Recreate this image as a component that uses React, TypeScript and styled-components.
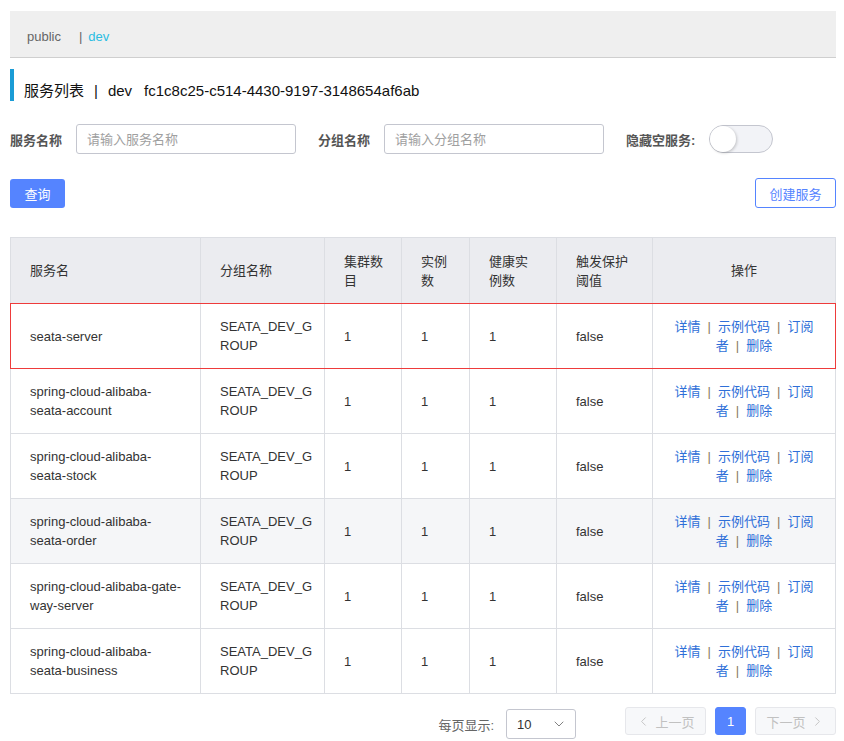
import React from 'react';
import styled, { createGlobalStyle } from 'styled-components';
import { ChevronLeft, ChevronRight, ChevronDown } from 'lucide-react';

const Global = createGlobalStyle`
  html, body { margin: 0; padding: 0; background: #fff; }
  body {
    font-family: "Liberation Sans", "Noto Sans CJK SC", sans-serif;
    font-size: 13px;
    color: #333;
  }
  * { box-sizing: border-box; }
`;

const Page = styled.div`
  padding: 11px 8px 0 10px;
`;

const NsBar = styled.div`
  height: 47px;
  background: #efefef;
  border-bottom: 1px solid #cfcfcf;
  display: flex;
  align-items: center;
  padding: 5px 0 0 17px;
  font-size: 13px;
`;

const NsItem = styled.span<{ $active?: boolean }>`
  color: ${(p) => (p.$active ? '#2bbde2' : '#666')};
`;

const NsSep = styled.span`
  color: #666;
  margin: 0 6px 0 18px;
`;

const Title = styled.div`
  margin-top: 11px;
  height: 32px;
  border-left: 4px solid #1a9cd6;
  padding: 12px 0 0 10px;
  line-height: 20px;
  font-size: 15px;
  color: #111;
  white-space: nowrap;
`;

const TitleSep = styled.span`
  margin: 0 10px;
`;

const TitleGap = styled.span`
  margin-left: 12px;
`;

const FilterRow = styled.div`
  margin-top: 23px;
  display: flex;
  align-items: center;
  height: 30px;
`;

const Label = styled.label`
  font-weight: bold;
  color: #555;
  font-size: 13px;
  margin-right: 14px;
`;

const Input = styled.input`
  width: 220px;
  height: 30px;
  border: 1px solid #c4c6cf;
  border-radius: 3px;
  padding: 0 10px;
  font-size: 13px;
  font-family: inherit;
  margin-right: 22px;
  outline: none;
  &::placeholder {
    color: #a0a0a0;
  }
`;

const Switch = styled.div`
  position: relative;
  width: 64px;
  height: 28px;
  border-radius: 14px;
  background: #f2f3f7;
  border: 1px solid #c4c6cf;
`;

const Knob = styled.div`
  position: absolute;
  left: 0;
  top: 0;
  width: 26px;
  height: 26px;
  border-radius: 50%;
  background: #fff;
  box-shadow: 1px 1px 3px rgba(0, 0, 0, 0.2);
`;

const ActionRow = styled.div`
  margin-top: 24px;
  display: flex;
  justify-content: space-between;
  align-items: center;
  height: 30px;
`;

const PrimaryBtn = styled.button`
  height: 29px;
  width: 55px;
  background: #5584ff;
  color: #fff;
  border: none;
  border-radius: 3px;
  font-size: 13px;
  font-family: inherit;
  padding: 0;
`;

const OutlineBtn = styled.button`
  height: 30px;
  width: 81px;
  background: #fff;
  color: #5584ff;
  border: 1px solid #5584ff;
  border-radius: 3px;
  font-size: 13px;
  font-family: inherit;
  padding: 0;
`;

const Table = styled.table`
  margin-top: 29px;
  width: 826px;
  table-layout: fixed;
  border-collapse: separate;
  border-spacing: 0;
  border-top: 1px solid #dcdee3;
  border-left: 1px solid #dcdee3;
`;

const HeadRow = styled.tr`
  height: 66px;
  background: #ebecf0;
`;

const BodyRow = styled.tr<{ $hover?: boolean; $marked?: boolean }>`
  position: relative;
  height: 65px;
  background: ${(p) => (p.$hover ? '#f5f6f8' : '#fff')};
  &::after {
    content: '';
    display: ${(p) => (p.$marked ? 'block' : 'none')};
    position: absolute;
    left: -1px;
    top: -1px;
    right: 0;
    bottom: 0;
    border: 1px solid #ee3b3b;
    pointer-events: none;
  }
`;

const Th = styled.th<{ $center?: boolean; $pr?: number }>`
  border-right: 1px solid #dcdee3;
  border-bottom: 1px solid #dcdee3;
  padding: 0 ${(p) => p.$pr ?? 16}px 0 19px;
  text-align: ${(p) => (p.$center ? 'center' : 'left')};
  font-weight: normal;
  font-size: 13px;
  line-height: 19px;
  color: #333;
  vertical-align: middle;
`;

const Td = styled.td<{ $center?: boolean; $pr?: number }>`
  border-right: 1px solid #dcdee3;
  border-bottom: 1px solid #dcdee3;
  padding: 0 ${(p) => p.$pr ?? 16}px 0 19px;
  text-align: ${(p) => (p.$center ? 'center' : 'left')};
  font-size: 13px;
  line-height: 19px;
  color: #333;
  vertical-align: middle;
  word-break: ${(p) => (p.$pr === 6 ? 'break-all' : 'normal')};
`;

const Link = styled.a`
  color: #2f6fd8;
  cursor: pointer;
`;

const LinkSep = styled.span`
  color: #8a7a60;
  margin: 0 7px;
`;

const Pager = styled.div`
  margin-top: 13px;
  display: flex;
  justify-content: flex-end;
  align-items: flex-start;
`;

const PageSizeLabel = styled.span`
  color: #666;
  margin-top: 8px;
  margin-right: 12px;
`;

const Select = styled.div`
  margin-top: 2px;
  width: 70px;
  height: 30px;
  border: 1px solid #c4c6cf;
  border-radius: 3px;
  display: flex;
  align-items: center;
  justify-content: space-between;
  padding: 0 8px 0 10px;
  color: #333;
  margin-right: 40px;
`;

const PageBtn = styled.button<{ $active?: boolean; $w: number }>`
  width: ${(p) => p.$w}px;
  height: 28px;
  border-radius: 3px;
  border: 1px solid ${(p) => (p.$active ? '#5584ff' : '#e6e7eb')};
  background: ${(p) => (p.$active ? '#5584ff' : '#f7f8fa')};
  color: ${(p) => (p.$active ? '#fff' : '#c1c1c1')};
  font-size: 13px;
  font-family: inherit;
  display: flex;
  align-items: center;
  justify-content: center;
  gap: 4px;
  padding: 0;
  margin-left: 9px;
`;

const services = [
  'seata-server',
  'spring-cloud-alibaba-seata-account',
  'spring-cloud-alibaba-seata-stock',
  'spring-cloud-alibaba-seata-order',
  'spring-cloud-alibaba-gateway-server',
  'spring-cloud-alibaba-seata-business',
];

const displayName = (s: string) =>
  s === 'spring-cloud-alibaba-gateway-server' ? 'spring-cloud-alibaba-gate-way-server' : s;

export default function App() {
  return (
    <Page>
      <Global />
      <NsBar>
        <NsItem>public</NsItem>
        <NsSep>|</NsSep>
        <NsItem $active>dev</NsItem>
      </NsBar>

      <Title>
        服务列表<TitleSep>|</TitleSep>dev<TitleGap>fc1c8c25-c514-4430-9197-3148654af6ab</TitleGap>
      </Title>

      <FilterRow>
        <Label>服务名称</Label>
        <Input placeholder="请输入服务名称" />
        <Label>分组名称</Label>
        <Input placeholder="请输入分组名称" />
        <Label>隐藏空服务:</Label>
        <Switch>
          <Knob />
        </Switch>
      </FilterRow>

      <ActionRow>
        <PrimaryBtn>查询</PrimaryBtn>
        <OutlineBtn>创建服务</OutlineBtn>
      </ActionRow>

      <Table>
        <colgroup>
          <col style={{ width: 190 }} />
          <col style={{ width: 124 }} />
          <col style={{ width: 77 }} />
          <col style={{ width: 68 }} />
          <col style={{ width: 87 }} />
          <col style={{ width: 96 }} />
          <col style={{ width: 183 }} />
        </colgroup>
        <thead>
          <HeadRow>
            <Th>服务名</Th>
            <Th $pr={6}>分组名称</Th>
            <Th>集群数目</Th>
            <Th>实例数</Th>
            <Th>健康实例数</Th>
            <Th>触发保护阈值</Th>
            <Th $center $pr={19}>操作</Th>
          </HeadRow>
        </thead>
        <tbody>
          {services.map((s, i) => (
            <BodyRow key={s} $marked={i === 0} $hover={i === 3}>
              <Td>{displayName(s)}</Td>
              <Td $pr={6}>SEATA_DEV_GROUP</Td>
              <Td>1</Td>
              <Td>1</Td>
              <Td>1</Td>
              <Td>false</Td>
              <Td $center $pr={19}>
                <Link>详情</Link>
                <LinkSep>|</LinkSep>
                <Link>示例代码</Link>
                <LinkSep>|</LinkSep>
                <Link>订阅者</Link>
                <LinkSep>|</LinkSep>
                <Link>删除</Link>
              </Td>
            </BodyRow>
          ))}
        </tbody>
      </Table>

      <Pager>
        <PageSizeLabel>每页显示:</PageSizeLabel>
        <Select>
          <span>10</span>
          <ChevronDown size={16} strokeWidth={1.4} color="#777" />
        </Select>
        <PageBtn $w={81}>
          <ChevronLeft size={15} strokeWidth={1.5} />
          上一页
        </PageBtn>
        <PageBtn $w={31} $active>
          1
        </PageBtn>
        <PageBtn $w={81}>
          下一页
          <ChevronRight size={15} strokeWidth={1.5} />
        </PageBtn>
      </Pager>
    </Page>
  );
}
